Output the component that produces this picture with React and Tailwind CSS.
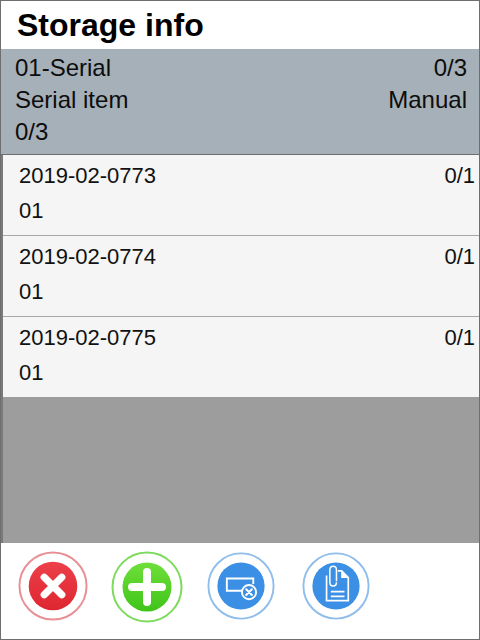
function Row({ id, last }) {
  return (
    <div className={last ? "h-[80px] bg-[#f5f5f5] pl-4 pr-1 text-[#111]" : "h-[81px] border-b border-[#a8a8a8] bg-[#f5f5f5] pl-4 pr-1 text-[#111]"}>
      <div className="flex h-[40px] items-center justify-between pt-[1px]">
        <span>{id}</span>
        <span>0/1</span>
      </div>
      <div className="flex h-[31px] items-center">01</div>
    </div>
  );
}

function Ring({ color, size, children, className }) {
  return (
    <svg width={size} height={size} viewBox="0 0 72 72" className={className}>
      <circle cx="36" cy="36" r="34.5" fill="#fff" stroke={color} strokeWidth="2" />
      {children}
    </svg>
  );
}

export default function App() {
  return (
    <div className="flex h-[640px] w-[480px] flex-col border border-[#6e6e6e] bg-white font-['Liberation_Sans',Arial,sans-serif] text-[22px] leading-none">
      <div className="flex h-[48px] items-center pl-[16px] text-[32px] font-bold text-black">Storage info</div>
      <div className="h-[106px] border-b border-[#6e6e6e] bg-[#a6b0b8] pl-[14px] pr-3 text-[24px] text-[#0d0d0d]">
        <div className="flex h-[37px] items-center justify-between">
          <span>01-Serial</span>
          <span>0/3</span>
        </div>
        <div className="flex h-[27px] items-center justify-between">
          <span>Serial item</span>
          <span>Manual</span>
        </div>
        <div className="flex h-[37px] items-center">0/3</div>
      </div>
      <div className="flex flex-1 flex-col border-l-2 border-[#7a7a7a] bg-[#9d9d9d]">
        <Row id="2019-02-0773" />
        <Row id="2019-02-0774" />
        <Row id="2019-02-0775" last />
      </div>
      <div className="flex h-[96px] items-start bg-white pl-[17px] pt-[8px]">
        <Ring color="#e88f95" size={70} className="mr-[23px]">
          <defs>
            <linearGradient id="r" x1="0" y1="0" x2="0" y2="1">
              <stop offset="0" stopColor="#ec404a" />
              <stop offset="1" stopColor="#de2630" />
            </linearGradient>
          </defs>
          <circle cx="36" cy="36" r="25" fill="url(#r)" />
          <path d="M27 27 L45 45 M45 27 L27 45" stroke="#fff" strokeWidth="7.5" strokeLinecap="round" />
        </Ring>
        <Ring color="#7ddb5c" size={72} className="mr-[24px]">
          <defs>
            <linearGradient id="g" x1="0" y1="0" x2="0" y2="1">
              <stop offset="0" stopColor="#6fdf3a" />
              <stop offset="1" stopColor="#3fc41a" />
            </linearGradient>
          </defs>
          <circle cx="36" cy="36" r="24.5" fill="url(#g)" />
          <path d="M21 36 H51 M36 21 V51" stroke="#fff" strokeWidth="8" strokeLinecap="round" />
        </Ring>
        <Ring color="#8fbdec" size={68} className="mr-[27px] mt-[1px]">
          <circle cx="36" cy="36" r="25" fill="#3b8fe4" />
          <path d="M38 41 H21 V28 H49 V34" fill="none" stroke="#fff" strokeWidth="2" />
          <circle cx="44.5" cy="42.5" r="7.5" fill="#3b8fe4" stroke="#fff" strokeWidth="2" />
          <path d="M41.5 39.5 L47.5 45.5 M47.5 39.5 L41.5 45.5" stroke="#fff" strokeWidth="2.2" strokeLinecap="round" />
        </Ring>
        <Ring color="#8fbdec" size={68} className="mt-[1px]">
          <circle cx="36" cy="36" r="25" fill="#3b8fe4" />
          <path d="M26 25 V51.5 H49 V27 L42 20 H38" fill="none" stroke="#fff" strokeWidth="1.8" />
          <path d="M41.5 20 V27.5 H49 Z" fill="#fff" />
          <path d="M36.5 31 V19 Q36.5 15 33 15 Q29.5 15 29.5 19 V32 Q29.5 36 33 36 Q36.5 36 36.5 32" fill="none" stroke="#fff" strokeWidth="1.6" />
          <path d="M30.5 42 H45 M30.5 47 H45" stroke="#fff" strokeWidth="1.8" />
        </Ring>
      </div>
    </div>
  );
}
